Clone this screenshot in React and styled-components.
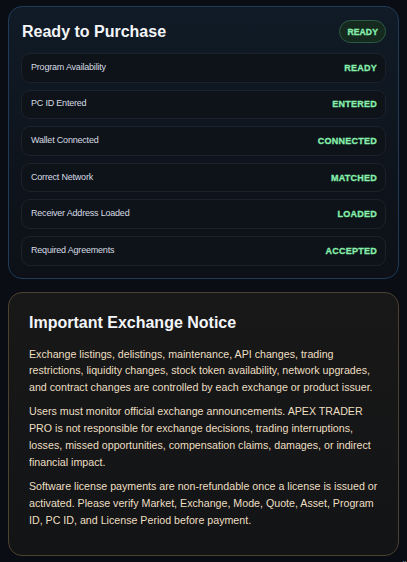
import React from "react";
import styled, { createGlobalStyle } from "styled-components";

const GlobalStyle = createGlobalStyle`
  html, body {
    margin: 0;
    background: #0a0d14;
  }
  body {
    padding: 6px 8px 0;
    font-family: "Liberation Sans", Arial, sans-serif;
    overflow: hidden;
  }
`;

const Page = styled.div`
  display: flex;
  flex-direction: column;
  gap: 13px;
`;

const Card = styled.section`
  border-radius: 14px;
  border: 1px solid ${p => (p.tone === "gold" ? "#4d4130" : "#1f3b58")};
  background: ${p =>
    p.tone === "gold"
      ? "linear-gradient(180deg, #181818 0%, #131416 100%)"
      : "linear-gradient(180deg, #101b27 0%, #0e141c 60%, #0d1117 100%)"};
  padding: ${p => (p.tone === "gold" ? "20px 20px 19px" : "13px 12px 12px")};
`;

const Header = styled.div`
  display: flex;
  align-items: center;
  justify-content: space-between;
  padding-left: 1px;
  margin-bottom: 10px;
`;

const Title = styled.h2`
  margin: 0;
  font-size: 16px;
  line-height: 20px;
  font-weight: 700;
  color: #f3f5f8;
`;

const Badge = styled.span`
  display: inline-flex;
  align-items: center;
  height: 23px;
  box-sizing: border-box;
  padding: 0 7px;
  border-radius: 12px;
  border: 1px solid #2c5a43;
  background: #15291f;
  color: #86efac;
  font-size: 8.6px;
  font-weight: 700;
  letter-spacing: 0.1px;
  -webkit-text-stroke: 0.3px #86efac;
`;

const List = styled.div`
  display: flex;
  flex-direction: column;
  gap: 7px;
`;

const Row = styled.div`
  display: flex;
  align-items: center;
  justify-content: space-between;
  height: 29.6px;
  box-sizing: border-box;
  padding: 0 8px 0 9px;
  border-radius: 9px;
  border: 1px solid #1b222c;
  background: #0e1219;
`;

const Label = styled.span`
  font-size: 9px;
  letter-spacing: -0.2px;
  color: #d6dce3;
  margin-top: -2px;
`;

const Status = styled.span`
  font-size: 9px;
  font-weight: 700;
  letter-spacing: 0.25px;
  color: #86efac;
  -webkit-text-stroke: 0.3px #86efac;
`;

const NoticeTitle = styled(Title)`
  margin-bottom: 13px;
`;

const Para = styled.p`
  margin: 0 0 7.3px;
  font-size: 10.66px;
  line-height: 16.85px;
  color: #ecdfc2;
`;

const Footer = styled.div`
  height: 10px;
  padding-left: 384px;
  white-space: nowrap;
  font-size: 9px;
  color: #9aa3ad;
  line-height: 14px;
  margin-top: -11px;
`;

const checks = [
  ["Program Availability", "READY"],
  ["PC ID Entered", "ENTERED"],
  ["Wallet Connected", "CONNECTED"],
  ["Correct Network", "MATCHED"],
  ["Receiver Address Loaded", "LOADED"],
  ["Required Agreements", "ACCEPTED"],
];

export default function App() {
  return (
    <Page>
      <GlobalStyle />
      <Card>
        <Header>
          <Title>Ready to Purchase</Title>
          <Badge>READY</Badge>
        </Header>
        <List>
          {checks.map(([label, status]) => (
            <Row key={label}>
              <Label>{label}</Label>
              <Status>{status}</Status>
            </Row>
          ))}
        </List>
      </Card>
      <Card tone="gold">
        <NoticeTitle>Important Exchange Notice</NoticeTitle>
        <Para>
          Exchange listings, delistings, maintenance, API changes, trading
          restrictions, liquidity changes, stock token availability, network
          upgrades, and contract changes are controlled by each exchange or
          product issuer.
        </Para>
        <Para>
          Users must monitor official exchange announcements. APEX TRADER PRO is
          not responsible for exchange decisions, trading interruptions, losses,
          missed opportunities, compensation claims, damages, or indirect
          financial impact.
        </Para>
        <Para>
          Software license payments are non-refundable once a license is issued
          or activated. Please verify Market, Exchange, Mode, Quote, Asset,
          Program ID, PC ID, and License Period before payment.
        </Para>
      </Card>
      <Footer>Follow</Footer>
    </Page>
  );
}
